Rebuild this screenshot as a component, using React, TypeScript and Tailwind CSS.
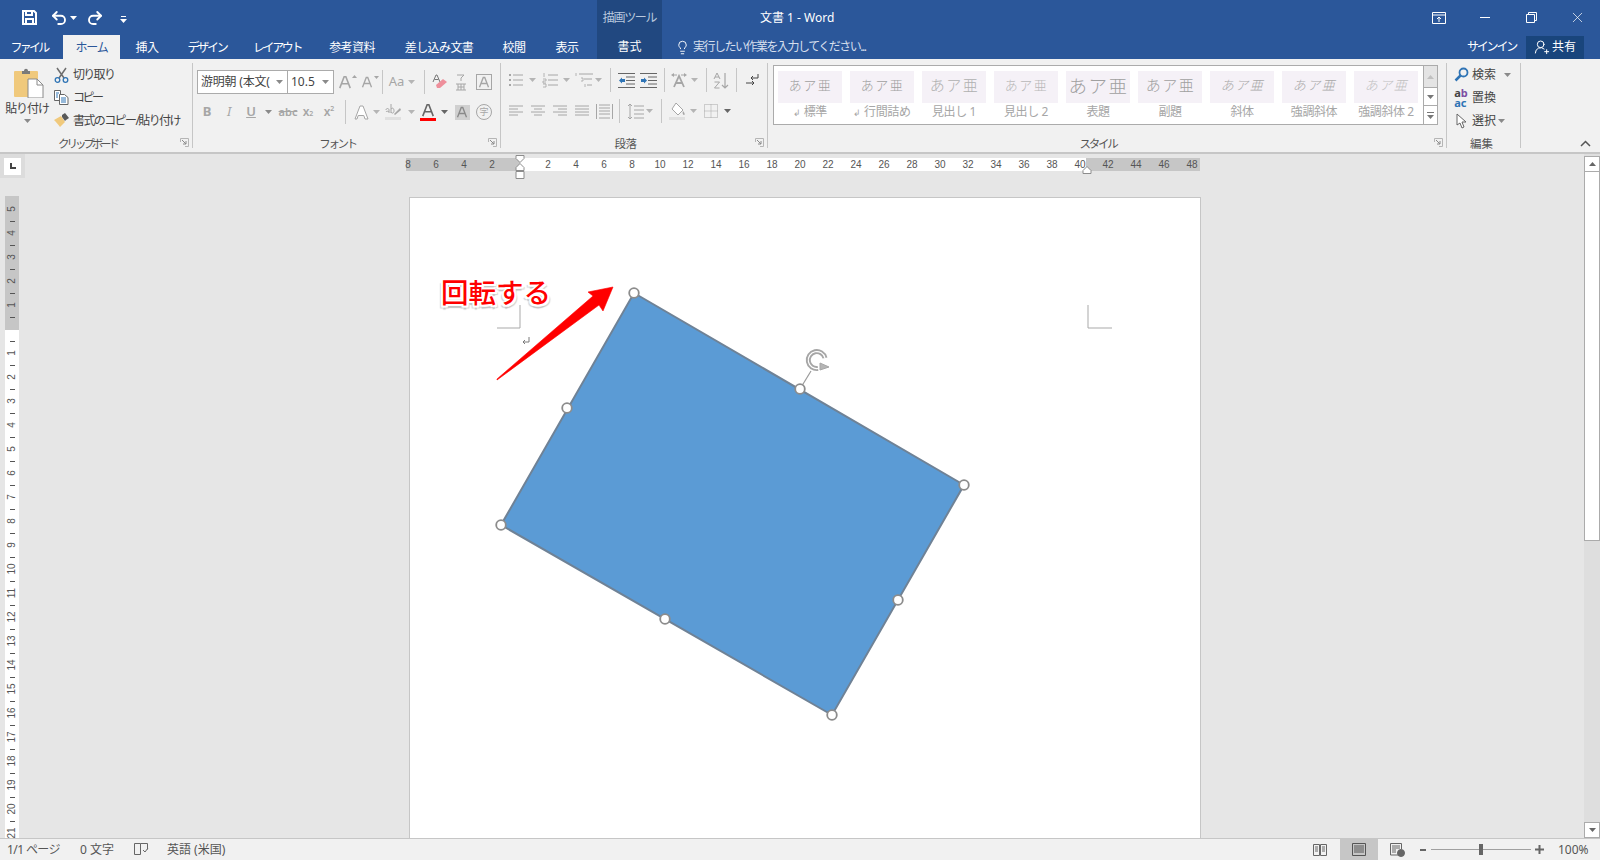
import { Lightbulb, Redo2, Undo2, UserRoundPlus, X } from "lucide-react";
import type { ReactNode } from "react";

const GREY = "#a6a6a6";

const tabs = [
  { label: "挿入", width: "w-[54px]", track: "tracking-[-.6px]" },
  { label: "デザイン", width: "w-[66px]", track: "tracking-[-2.200px]" },
  { label: "レイアウト", width: "w-[74px]", track: "tracking-[-2.400px]" },
  { label: "参考資料", width: "w-[76px]", track: "tracking-[-.6px]" },
  { label: "差し込み文書", width: "w-[98px]", track: "tracking-[-.6px]" },
  { label: "校閲", width: "w-[52px]", track: "tracking-[-.6px]" },
  { label: "表示", width: "w-[54px]", track: "tracking-[-.6px]" },
];

const styles = [
  { label: "標準", mark: true, text: "text-[13px] text-[#a0a0a0]" },
  { label: "行間詰め", mark: true, text: "text-[13px] text-[#a0a0a0]" },
  { label: "見出し 1", text: "text-[15px] text-[#b0b0b0]" },
  { label: "見出し 2", text: "text-[13px] text-[#b8b8b8]" },
  { label: "表題", text: "text-[18.500px] text-[#a0a0a0]" },
  { label: "副題", text: "text-[15px] text-[#a0a0a0]" },
  { label: "斜体", text: "text-[13px] italic text-[#a8a8a8]" },
  { label: "強調斜体", text: "text-[13px] italic text-[#a8a8a8]" },
  { label: "強調斜体 2", text: "text-[13px] italic text-[#c0c0c0]" },
];

const leftNumbers = [8, 6, 4, 2];
const midNumbers = Array.from({ length: 20 }, (_, i) => (i + 1) * 2);
const rightNumbers = [42, 44, 46, 48];
const upNumbers = [5, 4, 3, 2, 1];
const downNumbers = Array.from({ length: 21 }, (_, i) => i + 1);

function Caret({ color = "#8a8a8a" }: { color?: string }) {
  return (
    <svg width="7" height="4" viewBox="0 0 7 4" className="shrink-0">
      <path d="M0 0h7L3.500 4z" fill={color} />
    </svg>
  );
}

function Cell({ className, children }: { className: string; children?: ReactNode }) {
  return <div className={`flex h-full shrink-0 items-center justify-center ${className}`}>{children}</div>;
}

function Sep({ className = "" }: { className?: string }) {
  return <div className={`h-[24px] w-px shrink-0 bg-[#c6c6c6] ${className}`} />;
}

function Launcher() {
  return (
    <svg width="9" height="9" viewBox="0 0 9 9" className="absolute bottom-[1px] right-[3px]">
      <path d="M.500 4V.500H8.500V8.500H5" fill="none" stroke="#b5b5b5" />
      <path d="M2 2l4 4M6 3v3H3" fill="none" stroke="#8a8a8a" />
    </svg>
  );
}

function GroupLabel({ children, className }: { children: string; className: string }) {
  return (
    <div className={`mt-auto -mb-[4px] h-[16px] whitespace-nowrap text-center text-[11.500px] leading-[16px] text-[#555555] ${className}`}>
      {children}
    </div>
  );
}

function Lines({ kind }: { kind: "left" | "center" | "right" | "justify" }) {
  const rows =
    kind === "left"
      ? ["M1 3h14", "M1 6h9", "M1 9h14", "M1 12h9"]
      : kind === "center"
        ? ["M1 3h14", "M4 6h8", "M1 9h14", "M4 12h8"]
        : kind === "right"
          ? ["M1 3h14", "M6 6h9", "M1 9h14", "M6 12h9"]
          : ["M1 3h14", "M1 6h14", "M1 9h14", "M1 12h14"];
  return (
    <svg width="16" height="16" viewBox="0 0 16 16">
      <path d={rows.join("")} stroke={GREY} fill="none" />
    </svg>
  );
}

function PasteIcon() {
  return (
    <svg width="30" height="30" viewBox="0 0 30 30">
      <rect x="0" y="3" width="24" height="26" rx="1" fill="#f0c97c" />
      <path d="M8 3h2c0-3 4-3 4 0h2v3H8z" fill="#7a7a7a" />
      <path d="M14 11h9l6 6v13H14z" fill="#fff" stroke="#8a8a8a" />
      <path d="M23 11v6h6" fill="none" stroke="#8a8a8a" />
    </svg>
  );
}

function ScissorsIcon() {
  return (
    <svg width="15" height="16" viewBox="0 0 15 16">
      <path d="M3 1l7 10M12 1L5 11" stroke="#6e6e6e" strokeWidth="1.500" fill="none" />
      <circle cx="3.500" cy="13" r="2.300" fill="none" stroke="#2f74b5" strokeWidth="1.300" />
      <circle cx="11.500" cy="13" r="2.300" fill="none" stroke="#2f74b5" strokeWidth="1.300" />
    </svg>
  );
}

function CopyIcon() {
  return (
    <svg width="15" height="15" viewBox="0 0 15 15" fill="#fff" stroke="#666">
      <path d="M.500.500h6v10h-6z" />
      <path d="M5.500 4.500h5l3.500 3v7h-8.500z" />
      <path d="M2 3h3M2 5h2M2 7h2M7 8h5M7 10h5M7 12h5" stroke="#2f74b5" />
    </svg>
  );
}

function BrushIcon() {
  return (
    <svg width="16" height="15" viewBox="0 0 16 15">
      <path d="M0 7l7-4 4 6-5 5C4 11 2 9 0 7z" fill="#f0c97c" />
      <path d="M8 2l3-2 4 5-3 2-1 1-3-4z" fill="#595959" />
    </svg>
  );
}

function PlainA({ size = 16, color = GREY, className = "" }: { size?: number; color?: string; className?: string }) {
  return (
    <svg width={size} height={size} viewBox="0 0 16 16" className={className}>
      <path d="M2 15L7 2h2l5 13M4.500 10h7" fill="none" stroke={color} strokeWidth="1.800" />
    </svg>
  );
}

function EraserIcon() {
  return (
    <svg width="16" height="16" viewBox="0 0 16 16">
      <path d="M1 8l3-7h1l3 7M2.500 5.500h4" fill="none" stroke="#777" />
      <path d="M4 11l7-6 4 3-7 6H5z" fill="#ee8f9b" />
    </svg>
  );
}

function RubyIcon() {
  return (
    <svg width="12" height="17" viewBox="0 0 12 17" fill="none" stroke={GREY}>
      <path d="M2 1h7L6 4M6 4v3" />
      <path d="M1 10h10M3 10v6M9 10v6M6 10v6M3 13h6M1 16h10" />
    </svg>
  );
}

function BoxA() {
  return (
    <div className="flex h-[16px] w-[16px] items-center justify-center border border-[#a6a6a6]">
      <PlainA size={12} />
    </div>
  );
}

function BulletIcon() {
  return (
    <svg width="16" height="16" viewBox="0 0 16 16">
      <path d="M5 3h10M5 8h10M5 13h10" stroke={GREY} />
      <path d="M1 2h2v2H1zM1 7h2v2H1zM1 12h2v2H1z" fill={GREY} />
    </svg>
  );
}

function NumberIcon() {
  return (
    <svg width="16" height="16" viewBox="0 0 16 16">
      <path d="M6 3h10M6 8h10M6 13h10" stroke={GREY} />
      <path d="M2 1v4M1 7h3v2H1v2h3M1 12h3v3H1" fill="none" stroke={GREY} strokeWidth=".800" />
    </svg>
  );
}

function MultiIcon() {
  return (
    <svg width="18" height="16" viewBox="0 0 18 16">
      <path d="M4 2h14M9 7h8M12 13h5" stroke={GREY} />
      <path d="M1 1v3M6 6h2v3H6M10 12v3" fill="none" stroke={GREY} strokeWidth=".800" />
    </svg>
  );
}

function IndentIcon({ dir }: { dir: "out" | "in" }) {
  return (
    <svg width="17" height="15" viewBox="0 0 17 15">
      <path d="M0 .500h17M8 4h9M8 7.500h9M8 11h9M0 14.500h17" stroke="#666" />
      {dir === "out" ? (
        <path d="M1 7.500L4 4.500V6h3v3H4v1.500z" fill="#2f74b5" />
      ) : (
        <path d="M7 7.500L4 4.500V6H1v3h3v1.500z" fill="#2f74b5" />
      )}
    </svg>
  );
}

function DirectionIcon() {
  return (
    <svg width="18" height="16" viewBox="0 0 18 16">
      <path d="M4 15l5-11 5 11M6 11h6" fill="none" stroke={GREY} strokeWidth="1.800" />
      <path d="M1 3l3-2v4zM17 3l-3-2v4z" fill={GREY} />
      <path d="M4 3h3M11 3h3" stroke={GREY} />
    </svg>
  );
}

function SortIcon() {
  return (
    <svg width="17" height="17" viewBox="0 0 17 17" fill="none" stroke={GREY}>
      <path d="M1 7l3-6 3 6M2 5h4M1.500 10h5L1.500 16h5" />
      <path d="M12 1v15M9 13l3 3 3-3" strokeWidth="1.200" />
    </svg>
  );
}

function ParaMarkIcon() {
  return (
    <svg width="16" height="16" viewBox="0 0 16 16" fill="none" stroke="#444">
      <path d="M14 2v4H7M9 4L7 6l2 2" />
      <path d="M2 11h8M8 9l2 2-2 2" />
    </svg>
  );
}

function DistributeIcon() {
  return (
    <svg width="17" height="17" viewBox="0 0 17 17" fill="none" stroke={GREY}>
      <path d="M.500 1v15M16.500 1v15M3 2h11M3 5h11M3 8h11M3 11h11M3 15h11" />
    </svg>
  );
}

function LineSpaceIcon() {
  return (
    <svg width="17" height="17" viewBox="0 0 17 17" fill="none" stroke={GREY}>
      <path d="M3 1v15M1 3l2-2 2 2M1 14l2 2 2-2M7 3h10M7 7h10M7 11h10M7 15h10" />
    </svg>
  );
}

function ShadeIcon() {
  return (
    <svg width="17" height="18" viewBox="0 0 17 18">
      <path d="M7 1l7 7-5 5-6-6z" fill="#fff" stroke={GREY} />
      <path d="M14 9c2 2 2 4 1 4s-2-2-1-4z" fill={GREY} />
      <path d="M0 15h16v3H0z" fill="#e0e0e0" />
    </svg>
  );
}

function BorderIcon() {
  return (
    <svg width="14" height="14" viewBox="0 0 14 14" fill="none" stroke={GREY} strokeDasharray="1 1">
      <path d="M.500.500h13v13h-13zM.500 7h13M7 .500v13" />
    </svg>
  );
}

function SearchIcon() {
  return (
    <svg width="15" height="15" viewBox="0 0 15 15" fill="none">
      <circle cx="9.500" cy="5.500" r="4" stroke="#2f74b5" strokeWidth="1.800" />
      <path d="M6.500 8.500L1.500 13.500" stroke="#2f74b5" strokeWidth="2.500" />
    </svg>
  );
}

function ArrowCursor() {
  return (
    <svg width="12" height="16" viewBox="0 0 12 16">
      <path d="M1 1v11l3-2 2 5 2-1-2-5h4z" fill="#fff" stroke="#666" />
    </svg>
  );
}

function ClipboardGroup() {
  return (
    <div className="relative flex h-[85px] w-[193px] shrink-0 flex-col border-r border-[#c6c6c6]">
      <div className="flex">
        <div className="flex w-[54px] shrink-0 flex-col items-center pt-[5px]">
          <div className="pl-[4px]">
            <PasteIcon />
          </div>
          <div className="mt-[3px] text-[12px] leading-[16px] tracking-[-1.100px] text-[#444444]">貼り付け</div>
          <div className="mt-[2px]">
            <Caret />
          </div>
        </div>
        <div className="flex flex-1 flex-col">
          <div className="flex h-[23px] items-center gap-[4px]">
            <ScissorsIcon />
            <span className="text-[12px] tracking-[-1.700px] text-[#444444]">切り取り</span>
          </div>
          <div className="flex h-[23px] items-center gap-[4px]">
            <CopyIcon />
            <span className="text-[12px] tracking-[-2.500px] text-[#444444]">コピー</span>
          </div>
          <div className="flex h-[23px] items-center gap-[3px]">
            <BrushIcon />
            <span className="whitespace-nowrap text-[12px] tracking-[-1.600px] text-[#444444]">書式のコピー/貼り付け</span>
          </div>
        </div>
      </div>
      <GroupLabel className="pr-[17px] tracking-[-3.100px]">クリップボード</GroupLabel>
      <Launcher />
    </div>
  );
}

function FontGroup() {
  return (
    <div className="relative flex h-[85px] w-[308px] shrink-0 flex-col border-r border-[#c6c6c6]">
      <div className="mt-[7px] flex h-[24px] pl-[4px]">
        <div className="flex h-full w-[91px] shrink-0 items-center justify-between border border-[#ababab] bg-white pl-[3px] pr-[4px]">
          <span className="whitespace-nowrap text-[12px] tracking-[-.2px] text-[#444444]">游明朝 (本文(</span>
          <Caret />
        </div>
        <div className="-ml-px flex h-full w-[47px] shrink-0 items-center justify-between border border-[#ababab] bg-white pl-[3px] pr-[4px]">
          <span className="text-[12px] text-[#444444]">10.5</span>
          <Caret />
        </div>
        <Cell className="w-[22px]">
          <div className="relative">
            <PlainA size={14} />
            <svg width="5" height="3" className="absolute -right-[5px] top-0"><path d="M0 3l2.500-3 2.500 3z" fill={GREY} /></svg>
          </div>
        </Cell>
        <Cell className="w-[22px]">
          <div className="relative">
            <PlainA size={12} />
            <svg width="5" height="3" className="absolute -right-[6px] top-0"><path d="M0 0l2.500 3 2.500-3z" fill={GREY} /></svg>
          </div>
        </Cell>
        <Sep className="ml-[4px]" />
        <Cell className="w-[36px] gap-[4px] pl-[2px]">
          <span className="text-[13px] text-[#a6a6a6]">Aa</span>
          <Caret color="#b5b5b5" />
        </Cell>
        <Sep className="ml-[5px]" />
        <Cell className="w-[30px]">
          <EraserIcon />
        </Cell>
        <Cell className="w-[12px]">
          <RubyIcon />
        </Cell>
        <Cell className="ml-[5px] w-[24px]">
          <BoxA />
        </Cell>
      </div>
      <div className="mt-[6px] flex h-[24px] pl-[4px]">
        <Cell className="w-[20px] text-[13px] font-bold text-[#a6a6a6]">B</Cell>
        <Cell className="w-[24px] text-[13px] italic text-[#a6a6a6]">I</Cell>
        <Cell className="w-[20px] text-[13px] font-semibold text-[#a6a6a6] underline">U</Cell>
        <Cell className="w-[14px]">
          <Caret />
        </Cell>
        <Cell className="w-[26px] text-[11px] font-semibold text-[#a6a6a6] line-through">abc</Cell>
        <Cell className="w-[14px] text-[12px] font-semibold text-[#a6a6a6]">
          x<sub className="text-[7px]">2</sub>
        </Cell>
        <Cell className="w-[28px] text-[12px] font-semibold text-[#a6a6a6]">
          x<sup className="text-[7px]">2</sup>
        </Cell>
        <Sep className="ml-[2px]" />
        <Cell className="ml-[3px] w-[24px]">
          <svg width="17" height="17" viewBox="0 0 17 17">
            <path d="M2 15L7 2h3l5 13h-3l-1.200-3.500H5.200L4 15z" fill="#fff" stroke={GREY} />
          </svg>
        </Cell>
        <Cell className="w-[6px]">
          <Caret color="#b5b5b5" />
        </Cell>
        <Cell className="ml-[2px] w-[24px]">
          <svg width="17" height="18" viewBox="0 0 17 18">
            <path d="M0 14h16v3H0z" fill="#e0e0e0" />
            <path d="M1 7c0-2 3-2 3 0v3M1 9c0-1 3-1 3 0M6 1v9M6 6c2-2 3 0 3 2s-2 3-3 1" fill="none" stroke={GREY} />
            <path d="M9 11l6-6 1 2-6 5z" fill={GREY} />
          </svg>
        </Cell>
        <Cell className="w-[12px]">
          <Caret color="#b5b5b5" />
        </Cell>
        <Cell className="w-[22px]">
          <div className="flex flex-col items-center">
            <PlainA size={14} color="#666666" />
            <div className="mt-[1px] h-[3px] w-[16px] bg-[#ff0000]" />
          </div>
        </Cell>
        <Cell className="w-[10px]">
          <Caret color="#666666" />
        </Cell>
        <Cell className="w-[26px]">
          <div className="flex h-[15px] w-[15px] items-center justify-center bg-[#d0d0d0]">
            <PlainA size={12} color="#8a8a8a" />
          </div>
        </Cell>
        <Cell className="w-[18px]">
          <div className="flex h-[16px] w-[16px] items-center justify-center rounded-full border border-[#a6a6a6] text-[9px] text-[#a6a6a6]">字</div>
        </Cell>
      </div>
      <GroupLabel className="pr-[18px] tracking-[-2.400px]">フォント</GroupLabel>
      <Launcher />
    </div>
  );
}

function ParagraphGroup() {
  return (
    <div className="relative flex h-[85px] w-[267px] shrink-0 flex-col border-r border-[#c6c6c6] pl-[1px]">
      <div className="mt-[5px] flex h-[24px]">
        <Cell className="w-[28px]"><BulletIcon /></Cell>
        <Cell className="w-[4px]"><Caret color="#b5b5b5" /></Cell>
        <Cell className="ml-[4px] w-[24px]"><NumberIcon /></Cell>
        <Cell className="w-[8px]"><Caret color="#b5b5b5" /></Cell>
        <Cell className="ml-[2px] w-[24px]"><MultiIcon /></Cell>
        <Cell className="w-[4px]"><Caret color="#b5b5b5" /></Cell>
        <Sep className="ml-[10px]" />
        <Cell className="ml-[4px] w-[22px]"><IndentIcon dir="out" /></Cell>
        <Cell className="w-[22px]"><IndentIcon dir="in" /></Cell>
        <Sep className="ml-[5px]" />
        <Cell className="ml-[2px] w-[24px]"><DirectionIcon /></Cell>
        <Cell className="w-[6px]"><Caret color="#b5b5b5" /></Cell>
        <Sep className="ml-[9px]" />
        <Cell className="ml-[2px] w-[24px]"><SortIcon /></Cell>
        <Sep className="ml-[3px]" />
        <Cell className="ml-[3px] w-[24px]"><ParaMarkIcon /></Cell>
      </div>
      <div className="mt-[7px] flex h-[24px]">
        <Cell className="ml-[3px] w-[22px]"><Lines kind="left" /></Cell>
        <Cell className="w-[22px]"><Lines kind="center" /></Cell>
        <Cell className="w-[22px]"><Lines kind="right" /></Cell>
        <Cell className="w-[22px]"><Lines kind="justify" /></Cell>
        <Cell className="w-[22px]"><DistributeIcon /></Cell>
        <Sep className="ml-[4px]" />
        <Cell className="ml-[3px] w-[24px]"><LineSpaceIcon /></Cell>
        <Cell className="w-[4px]"><Caret color="#b5b5b5" /></Cell>
        <Sep className="ml-[10px]" />
        <Cell className="ml-[3px] w-[24px]"><ShadeIcon /></Cell>
        <Cell className="w-[8px]"><Caret color="#b5b5b5" /></Cell>
        <Cell className="ml-[2px] w-[24px]"><BorderIcon /></Cell>
        <Cell className="w-[8px]"><Caret color="#666666" /></Cell>
      </div>
      <GroupLabel className="pr-[18px] tracking-[-.5px]">段落</GroupLabel>
      <Launcher />
    </div>
  );
}

function StyleGroup() {
  return (
    <div className="relative flex h-[85px] w-[679px] shrink-0 flex-col border-r border-[#c6c6c6]">
      <div className="ml-[5px] mt-[2px] flex h-[60px] w-[665px] border border-[#ababab] bg-white">
        <div className="flex flex-1 gap-[8px] pl-[4px] pt-[5px]">
          {styles.map((s) => (
            <div key={s.label} className="flex w-[64px] shrink-0 flex-col items-center">
              <div className={`flex h-[32px] w-full items-center justify-center overflow-hidden whitespace-nowrap bg-[#f5f1f7] pb-[3px] pl-[1px] font-light tracking-[1.500px] ${s.text}`}>
                あア亜
              </div>
              <div className="whitespace-nowrap text-[12px] leading-[17px] tracking-[-.4px] text-[#a6a6a6]">
                {s.mark && <span className="mr-[3px] text-[9px]">↲</span>}
                {s.label}
              </div>
            </div>
          ))}
        </div>
        <div className="flex w-[14px] shrink-0 flex-col border-l border-[#ababab]">
          <div className="flex h-[21px] items-center justify-center bg-[#e4e4e4]">
            <svg width="7" height="4"><path d="M0 4l3.500-4 3.500 4z" fill="#c0c0c0" /></svg>
          </div>
          <div className="flex h-[19px] items-center justify-center border-y border-[#ababab]">
            <Caret color="#777777" />
          </div>
          <div className="flex flex-1 flex-col items-center justify-center gap-[2px]">
            <div className="h-px w-[7px] bg-[#777777]" />
            <Caret color="#777777" />
          </div>
        </div>
      </div>
      <GroupLabel className="pr-[18px] tracking-[-2.200px]">スタイル</GroupLabel>
      <Launcher />
    </div>
  );
}

function EditGroup() {
  return (
    <div className="relative flex h-[85px] w-[74px] shrink-0 flex-col border-r border-[#c6c6c6] pl-[5px]">
      <div className="flex h-[23px] items-center">
        <Cell className="w-[18px]"><SearchIcon /></Cell>
        <span className="ml-[2px] text-[12px] text-[#444444]">検索</span>
        <span className="ml-[8px]"><Caret /></span>
      </div>
      <div className="flex h-[23px] items-center">
        <Cell className="w-[18px]">
          <div className="flex flex-col text-[11px] font-bold leading-[10px]">
            <span className="text-[#444444]">a<span className="text-[#7d4fa3]">b</span></span>
            <span className="text-[#2f74b5]">ac</span>
          </div>
        </Cell>
        <span className="ml-[2px] text-[12px] text-[#444444]">置換</span>
      </div>
      <div className="flex h-[23px] items-center">
        <Cell className="w-[18px] pl-[2px]"><ArrowCursor /></Cell>
        <span className="ml-[2px] text-[12px] text-[#444444]">選択</span>
        <span className="ml-[2px]"><Caret /></span>
      </div>
      <GroupLabel className="pr-[9px]">編集</GroupLabel>
    </div>
  );
}

function Ribbon() {
  return (
    <div className="flex h-[95px] shrink-0 border-b-2 border-[#c6c6c6] bg-[#f1f1f1] pt-[4px]">
      <ClipboardGroup />
      <FontGroup />
      <ParagraphGroup />
      <StyleGroup />
      <EditGroup />
      <div className="flex h-[85px] flex-1 items-end justify-end pb-[1px] pr-[9px]">
        <svg width="11" height="7" viewBox="0 0 11 7" fill="none" stroke="#555" strokeWidth="1.500">
          <path d="M1 6l4.500-4.500L10 6" />
        </svg>
      </div>
    </div>
  );
}

function TitleBar() {
  return (
    <div className="flex h-[59px] shrink-0 bg-[#2b579a] text-white">
      <div className="flex w-[597px] shrink-0 flex-col">
        <div className="flex h-[35px] items-center pl-[22px]">
          <svg width="15" height="15" viewBox="0 0 15 15" fill="none" stroke="#fff" strokeWidth="2">
            <path d="M1 1h11l2 2v11H1z" />
            <path d="M4 1v4h6V1M4 14V9h7v5" />
          </svg>
          <Undo2 size={18} strokeWidth={2.500} className="ml-[13px]" />
          <span className="ml-[2px]"><Caret color="#ffffff" /></span>
          <Redo2 size={18} strokeWidth={2.500} className="ml-[9px]" />
          <svg width="7" height="7" viewBox="0 0 7 7" className="ml-[16px] mt-[4px]">
            <path d="M1 0h5v1H1zM0 3h7L3.500 7z" fill="#fff" />
          </svg>
        </div>
        <div className="flex h-[24px] items-stretch pt-[1px] text-[12px]">
          <div className="flex w-[58px] items-center justify-center tracking-[-2.700px]">ファイル</div>
          <div className="ml-[5px] -mt-[1px] flex w-[57px] items-center justify-center bg-[#f1f1f1] pt-[1px] tracking-[-1.200px] text-[#2b579a]">ホーム</div>
          {tabs.map((t) => (
            <div key={t.label} className={`flex items-center justify-center ${t.width} ${t.track}`}>
              {t.label}
            </div>
          ))}
        </div>
      </div>
      <div className="flex w-[65px] shrink-0 flex-col items-center bg-[#214880]">
        <div className="flex h-[35px] items-center text-[12px] tracking-[-1.300px] text-[#b9c8de]">描画ツール</div>
        <div className="flex h-[24px] items-center text-[12px]">書式</div>
      </div>
      <div className="flex flex-1 flex-col">
        <div className="flex h-[35px]">
          <div className="flex items-center whitespace-nowrap pl-[98px] text-[12px]">文書 1 - Word</div>
          <div className="ml-auto flex">
            <div className="flex w-[46px] items-center justify-center">
              <svg width="14" height="12" viewBox="0 0 14 12" fill="none" stroke="#fff">
                <path d="M.500.500h13v11H.500zM.500 3h13" />
                <path d="M7 10V5M5 7l2-2 2 2" />
              </svg>
            </div>
            <div className="flex w-[46px] items-center justify-center">
              <div className="h-px w-[10px] bg-white" />
            </div>
            <div className="flex w-[46px] items-center justify-center">
              <svg width="11" height="11" viewBox="0 0 11 11" fill="none" stroke="#fff">
                <path d="M.500 2.500h8v8h-8zM2.500 2.500v-2h8v8h-2" />
              </svg>
            </div>
            <div className="flex w-[46px] items-center justify-center">
              <X size={17} strokeWidth={1} />
            </div>
          </div>
        </div>
        <div className="flex h-[24px] items-center pl-[15px]">
          <Lightbulb size={15} strokeWidth={1.500} className="-ml-[2px]" />
          <span className="ml-[3px] whitespace-nowrap text-[12px] tracking-[-1.500px] text-[#d5dfed]">実行したい作業を入力してください...</span>
          <span className="ml-auto text-[12px] tracking-[-2.200px]">サインイン</span>
          <div className="ml-[10px] mr-[16px] flex h-[23px] w-[58px] items-center justify-center gap-[2px] bg-[#19457c] text-[12px]">
            <UserRoundPlus size={16} strokeWidth={1.500} />
            共有
          </div>
        </div>
      </div>
    </div>
  );
}

function HorizontalRuler() {
  return (
    <div className="relative ml-[381px] mt-[4px] flex h-[13px] w-[794px] font-['Liberation_Sans',sans-serif] text-[10px] leading-[14px] text-[#555555]">
      <div className="flex w-[114px] shrink-0 bg-[#c6c6c6]">
        {leftNumbers.map((n, i) => (
          <div key={n} className={`w-[28px] shrink-0 text-center ${i === 0 ? "-ml-[12px]" : ""}`}>{n}</div>
        ))}
      </div>
      <div className="flex w-[566px] shrink-0 bg-white pl-[14px]">
        {midNumbers.map((n) => (
          <div key={n} className="w-[28px] shrink-0 text-center">{n}</div>
        ))}
      </div>
      <div className="flex w-[114px] shrink-0 bg-[#c6c6c6] pl-[8px]">
        {rightNumbers.map((n) => (
          <div key={n} className="w-[28px] shrink-0 text-center">{n}</div>
        ))}
      </div>
      <svg width="10" height="26" viewBox="0 0 10 26" className="absolute -top-[3px] left-[109px]" fill="#fff" stroke="#8c8c8c">
        <path d="M1 .500h8v3L5 7.500l-4-4z" />
        <path d="M5 8.500l4 4v3H1v-3z" />
        <path d="M1 16.500h8v7H1z" />
      </svg>
      <svg width="10" height="8" viewBox="0 0 10 8" className="absolute left-[676px] top-[8px]" fill="#fff" stroke="#8c8c8c">
        <path d="M5 .500l4 4v3H1v-3z" />
      </svg>
    </div>
  );
}

function Tick() {
  return (
    <div className="flex h-[12px] items-center justify-center">
      <div className="h-px w-[5px] bg-[#555555]" />
    </div>
  );
}

function VerticalRuler() {
  return (
    <div className="-mt-[1px] ml-[5px] flex h-[642px] w-[14px] shrink-0 flex-col overflow-hidden font-['Liberation_Sans',sans-serif] text-[10px] leading-[12px] text-[#555555]">
      <div className="flex h-[134px] shrink-0 flex-col bg-[#c6c6c6] pt-[7px]">
        {upNumbers.map((n, i) => (
          <div key={n}>
            {i > 0 && <Tick />}
            <div className="flex h-[12px] items-center justify-center">
              <span className="-rotate-90">{n}</span>
            </div>
          </div>
        ))}
        <Tick />
      </div>
      <div className="flex-1 bg-white pt-[5px]">
        {downNumbers.map((n) => (
          <div key={n}>
            <Tick />
            <div className="flex h-[12px] items-center justify-center">
              <span className="-rotate-90 whitespace-nowrap">{n}</span>
            </div>
          </div>
        ))}
      </div>
    </div>
  );
}

function Canvas() {
  return (
    <svg width="790" height="640" viewBox="410 198 790 640" className="absolute left-0 top-0">
      <path d="M520 305v23h-23M1088 305v23h24" fill="none" stroke="#a9a9a9" />
      <path d="M529 337v5h-6M525 340l-2 2 2 2" fill="none" stroke="#7a7a7a" />
      <path
        d="M497 379L593 296L588 292L613 287L603 311L599 305L497 380Z"
        fill="#ff0000"
        stroke="#ff0000"
        strokeWidth=".600"
        strokeLinejoin="round"
      />
      <path d="M634 293L964 485L832 715L501 525Z" fill="#5b9bd5" stroke="#6f8296" strokeWidth="2" />
      <path d="M800 389L811 371" stroke="#9a9a9a" strokeWidth="1.200" />
      <path d="M818 368.500A8.500 8.500 0 1 1 825 358" fill="none" stroke="#a6a6a6" strokeWidth="5" />
      <path d="M818 368.500A8.500 8.500 0 1 1 825 358" fill="none" stroke="#fff" strokeWidth="1.200" />
      <path d="M820 363v7l9-3z" fill="#b5b5b5" stroke="#a6a6a6" strokeLinejoin="round" />
      {[
        [634, 293],
        [964, 485],
        [832, 715],
        [501, 525],
        [800, 389],
        [898, 600],
        [665, 619],
        [567, 408],
      ].map(([cx, cy]) => (
        <circle key={`${cx}-${cy}`} cx={cx} cy={cy} r="4.800" fill="#fff" stroke="#8c8c8c" strokeWidth="1.800" />
      ))}
    </svg>
  );
}

function Page() {
  return (
    <div className="relative ml-[390px] h-full w-[792px] shrink-0 overflow-hidden border-x border-t border-[#c6c6c6] bg-white">
      <Canvas />
      <div className="absolute left-[31px] top-[77px] whitespace-nowrap text-[27.500px] font-medium leading-[36px] text-[#ff0000] [text-shadow:2px_0_0_#fff,-2px_0_0_#fff,0_-2px_0_#fff,0_2px_0_#fff,2px_2px_0_#fff,-2px_2px_0_#fff,0_4px_1px_#c4c4c4,3px_3px_1px_#d4d4d4,-3px_3px_1px_#d4d4d4]">
        回転する
      </div>
    </div>
  );
}

function Scrollbar() {
  return (
    <div className="flex w-[16px] shrink-0 flex-col bg-[#dedede] pt-[2px]">
      <div className="flex h-[16px] items-center justify-center border border-[#ababab] bg-white">
        <svg width="7" height="4"><path d="M0 4l3.500-4 3.500 4z" fill="#666" /></svg>
      </div>
      <div className="-mt-px h-[370px] border border-[#ababab] bg-white" />
      <div className="flex-1" />
      <div className="flex h-[16px] items-center justify-center border border-[#ababab] bg-white">
        <Caret color="#666666" />
      </div>
    </div>
  );
}

function StatusBar() {
  return (
    <div className="flex h-[22px] shrink-0 items-center border-t-[1px] border-[#c6c6c6] bg-[#f1f1f1] text-[12px] text-[#555555]">
      <span className="ml-[7px] w-[73px] tracking-[-.6px]">1/1 ページ</span>
      <span className="w-[54px]">0 文字</span>
      <svg width="15" height="13" viewBox="0 0 15 13" fill="none" stroke="#666">
        <path d="M.500.500h6v11h-6zM6.500.500h7v6" />
        <path d="M9 7l2 2 3-4" />
      </svg>
      <span className="ml-[18px]">英語 (米国)</span>
      <div className="ml-auto flex h-full items-center">
        <svg width="14" height="14" viewBox="0 0 14 14" fill="none" stroke="#666">
          <path d="M.500 1.500h6v11h-6zM7.500 1.500h6v11h-6zM2 4h3M2 6h3M2 8h3M9 4h3M9 6h3M9 8h3" />
        </svg>
        <div className="ml-[13px] flex h-full w-[38px] items-center justify-center bg-[#c6c6c6]">
          <svg width="14" height="13" viewBox="0 0 14 13" fill="none" stroke="#555">
            <path d="M.500.500h13v12H.500zM2 3h10M2 5h10M2 7h10M2 9h10" />
          </svg>
        </div>
        <div className="ml-[12px]">
          <svg width="15" height="14" viewBox="0 0 15 14" fill="none" stroke="#666">
            <path d="M8 12H.500V.500h11V6M2 3h8M2 5h8M2 7h4M2 9h4" />
            <circle cx="11" cy="10" r="3.500" fill="#666" />
          </svg>
        </div>
        <div className="ml-[15px] h-[2px] w-[6px] bg-[#666666]" />
        <div className="relative ml-[5px] h-px w-[100px] bg-[#a0a0a0]">
          <div className="absolute left-[48px] top-[-5px] h-[11px] w-[4px] bg-[#666666]" />
        </div>
        <svg width="9" height="9" viewBox="0 0 9 9" className="ml-[4px]">
          <path d="M3.500 0h2v3.500H9v2H5.500V9h-2V5.500H0v-2h3.500z" fill="#666" />
        </svg>
        <span className="ml-[14px] mr-[9px] w-[33px]">100%</span>
      </div>
    </div>
  );
}

export default function App() {
  return (
    <div className="flex h-[860px] w-[1600px] flex-col overflow-hidden bg-[#e6e6e6] font-['Noto_Sans','Noto_Sans_CJK_JP',sans-serif]">
      <TitleBar />
      <Ribbon />
      <div className="flex min-h-0 flex-1">
        <div className="flex min-w-0 flex-1 flex-col">
          <div className="flex h-[43px] shrink-0">
            <div className="flex h-[24px] w-[25px] shrink-0 items-center justify-center bg-[#dcdcdc]">
              <div className="flex h-[17px] w-[17px] items-center justify-center bg-white">
                <svg width="6" height="6"><path d="M0 0h2v4h4v2H0z" fill="#444" /></svg>
              </div>
            </div>
            <HorizontalRuler />
          </div>
          <div className="flex min-h-0 flex-1">
            <VerticalRuler />
            <Page />
          </div>
        </div>
        <Scrollbar />
      </div>
      <StatusBar />
    </div>
  );
}
